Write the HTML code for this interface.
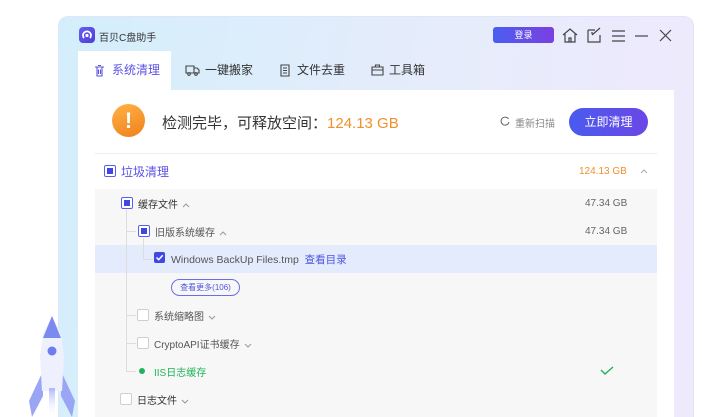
<!DOCTYPE html>
<html><head><meta charset="utf-8"><style>
*{margin:0;padding:0;box-sizing:border-box}
html,body{width:725px;height:417px;overflow:hidden}
body{background:#fff;font-family:"Liberation Sans","Noto Sans CJK SC",sans-serif;position:relative}
.win{position:absolute;left:58px;top:16px;width:636px;height:401px;border-radius:10px 10px 0 0;background:linear-gradient(100deg,#d3eefb 0%,#e6ecfb 55%,#efe9fc 100%);border:1px solid #dfe6fa;border-bottom:none}
.abs{position:absolute}
.tab{position:absolute;top:51px;height:39px;font-size:12px;color:#333;line-height:39px}
.panel{position:absolute;left:78px;top:90px;width:596px;height:327px;background:#fff}
.list{position:absolute;left:95px;top:189px;width:562px;height:228px;background:#f7f7f7}
.cb{position:absolute;width:12px;height:12px;border:1px solid #cfcfcf;background:#fff;border-radius:2px}
.cbp{border-color:#5b5ff0}
.cbp::after{content:"";position:absolute;left:2px;top:2px;width:6px;height:6px;background:#4148e0}
.t{position:absolute;font-size:11px;color:#333;white-space:nowrap}
.g{position:absolute;font-size:10px;color:#666}
.ln{position:absolute;background:#ddd}
.ch{display:inline-block;vertical-align:middle;margin-left:4px}
</style></head><body>
<div class="win"></div>
<div class="abs" style="left:79px;top:27px;width:16px;height:16px;border-radius:4px;background:linear-gradient(135deg,#6a5cf0,#4a3fd8)"></div>
<svg class="abs" style="left:81px;top:29px" width="12" height="12" viewBox="0 0 12 12"><path d="M3 9 A4 4 0 1 1 9 9" stroke="#fff" stroke-width="1.8" fill="none"/><circle cx="6" cy="6.5" r="1.6" fill="#fff"/></svg>
<div class="t" style="left:99px;top:29px;font-size:10px">百贝C盘助手</div>
<div class="abs" style="left:493px;top:27px;width:61px;height:16px;border-radius:3px;background:linear-gradient(90deg,#4a5ef0,#7b3fe0);color:#fff;font-size:9px;text-align:center;line-height:16px">登录</div>
<svg class="abs" style="left:562px;top:27px" width="115" height="18" viewBox="0 0 115 18" fill="none" stroke="#444" stroke-width="1.2">
<path d="M1 8 L8 2 L15 8 M3 7 V15 H13 V7 M7 15 V11 H9 V15"/>
<path d="M26 3 H33 M26 3 V15 H38 V8 M30 8 L38 1 M29 6 H31"/>
<path d="M50 4 H63 M50 9 H63 M50 14 H63"/>
<path d="M73 9 H86"/>
<path d="M98 3 L109 14 M109 3 L98 14"/>
</svg>
<div class="abs" style="left:78px;top:51px;width:93px;height:40px;background:#fff"></div>
<svg class="abs" style="left:93px;top:64px" width="80" height="14" fill="none" stroke-width="1.1">
<path d="M2 3 H11 M4 3 V12 H9 V3 M5 1.5 H8 M5.5 5.5 V10 M7.5 5.5 V10" stroke="#5b52e6"/>
<path d="M94 3 H103 V10 H94Z M103 6 H107 L109 8 V10 H103 M96 12 a1 1 0 1 0 .1 0 M106 12 a1 1 0 1 0 .1 0" stroke="#444" transform="translate(-2,0)"/>
</svg>
<div class="tab" style="left:112px;color:#5b52e6">系统清理</div>
<svg class="abs" style="left:185px;top:63px" width="15" height="14" fill="none" stroke="#444" stroke-width="1.1"><path d="M1 3 H9 V10 H1Z M9 5 H12 L14 7 V10 H9"/><circle cx="4" cy="11" r="1.3"/><circle cx="11" cy="11" r="1.3"/></svg>
<div class="tab" style="left:205px">一键搬家</div>
<svg class="abs" style="left:279px;top:64px" width="12" height="13" fill="none" stroke="#444" stroke-width="1.1"><path d="M2 1 H10 V12 H2Z M4 4 H8 M4 6.5 H8 M4 9 H8"/></svg>
<div class="tab" style="left:297px">文件去重</div>
<svg class="abs" style="left:371px;top:64px" width="13" height="12" fill="none" stroke="#444" stroke-width="1.1"><path d="M1 3 H12 V11 H1Z M1 6 H12 M4.5 3 V1 H8.5 V3"/></svg>
<div class="tab" style="left:389px">工具箱</div>
<div class="panel"></div>
<div class="abs" style="left:112px;top:104px;width:33px;height:33px;border-radius:50%;background:linear-gradient(160deg,#ffb347,#f07f1a);color:#fff;font-size:22px;font-weight:bold;text-align:center;line-height:33px">!</div>
<div class="t" style="left:162px;top:112px;font-size:15px;color:#333">检测完毕，可释放空间：<span style="color:#f0902a">124.13 GB</span></div>
<svg class="abs" style="left:500px;top:116px" width="10" height="10"><path d="M8.5 3 A4 4 0 1 0 9 6" stroke="#666" fill="none" stroke-width="1"/></svg>
<div class="t" style="left:515px;top:115px;font-size:10px;color:#888">重新扫描</div>
<div class="abs" style="left:569px;top:108px;width:79px;height:28px;border-radius:14px;background:linear-gradient(90deg,#4a5bee,#6b47e6);color:#fff;font-size:12px;text-align:center;line-height:28px">立即清理</div>
<div class="ln" style="left:95px;top:153px;width:562px;height:1px;background:#eee"></div>
<div class="cb cbp" style="left:104px;top:165px"></div>
<div class="t" style="left:121px;top:163px;font-size:12px;color:#5b52e6">垃圾清理</div>
<div class="t" style="left:579px;top:166px;font-size:10px;color:#f0902a">124.13 GB</div>
<svg class="abs" style="left:640px;top:169px" width="8" height="5"><path d="M1 4 L4 1 L7 4" stroke="#aaa" fill="none"/></svg>
<div class="list"></div>
<div class="abs" style="left:95px;top:245px;width:562px;height:28px;background:#e3ebfc"></div>
<div class="ln" style="left:126px;top:210px;width:1px;height:161px"></div>
<div class="ln" style="left:126px;top:231px;width:10px;height:1px"></div>
<div class="ln" style="left:126px;top:315px;width:10px;height:1px"></div>
<div class="ln" style="left:126px;top:343px;width:10px;height:1px"></div>
<div class="ln" style="left:126px;top:371px;width:10px;height:1px"></div>
<div class="ln" style="left:143px;top:238px;width:1px;height:21px"></div>
<div class="ln" style="left:143px;top:259px;width:10px;height:1px"></div>
<div class="cb cbp" style="left:121px;top:197px"></div>
<div class="t" style="left:138px;top:196px;font-size:10px">缓存文件<svg class="ch" width="8" height="5"><path d="M1 4 L4 1 L7 4" stroke="#999" fill="none"/></svg></div>
<div class="g" style="left:585px;top:198px">47.34 GB</div>
<div class="cb cbp" style="left:138px;top:225px"></div>
<div class="t" style="left:155px;top:224px;font-size:10px;color:#555">旧版系统缓存<svg class="ch" width="8" height="5"><path d="M1 4 L4 1 L7 4" stroke="#999" fill="none"/></svg></div>
<div class="g" style="left:585px;top:226px">47.34 GB</div>
<div class="abs" style="left:154px;top:252px;width:11px;height:11px;border-radius:2px;background:#4148e0"></div>
<svg class="abs" style="left:154px;top:252px" width="11" height="11"><path d="M2.5 5.5 L4.7 7.7 L8.7 3.3" stroke="#fff" stroke-width="1.5" fill="none"/></svg>
<div class="t" style="left:171px;top:252px;font-size:10.5px;color:#555">Windows BackUp Files.tmp &nbsp;<span style="color:#4f55e0">查看目录</span></div>
<div class="abs" style="left:171px;top:279px;width:69px;height:17px;border:1px solid #6a6ee8;border-radius:9px;font-size:8px;color:#4f55e0;text-align:center;line-height:15px">查看更多(106)</div>
<div class="cb" style="left:137px;top:309px"></div>
<div class="t" style="left:154px;top:308px;font-size:10px;color:#555">系统缩略图<svg class="ch" width="8" height="5"><path d="M1 1 L4 4 L7 1" stroke="#999" fill="none"/></svg></div>
<div class="cb" style="left:137px;top:337px"></div>
<div class="t" style="left:154px;top:336px;font-size:10px;color:#555">CryptoAPI证书缓存<svg class="ch" width="8" height="5"><path d="M1 1 L4 4 L7 1" stroke="#999" fill="none"/></svg></div>
<div class="abs" style="left:139px;top:368px;width:6px;height:6px;border-radius:50%;background:#22b35a"></div>
<div class="t" style="left:154px;top:364px;font-size:10px;color:#22b35a">IIS日志缓存</div>
<svg class="abs" style="left:600px;top:366px" width="14" height="10"><path d="M1 4 L5 8 L13 1" stroke="#22b35a" stroke-width="1.4" fill="none"/></svg>
<div class="cb" style="left:120px;top:393px"></div>
<div class="t" style="left:137px;top:392px;font-size:10px">日志文件<svg class="ch" width="8" height="5"><path d="M1 1 L4 4 L7 1" stroke="#999" fill="none"/></svg></div>
<svg class="abs" style="left:24px;top:316px" width="56" height="101" viewBox="0 0 56 101">
<defs><linearGradient id="fl" x1="0" y1="0" x2="0" y2="1"><stop offset="0" stop-color="#aab6f8"/><stop offset="1" stop-color="#fff" stop-opacity="0"/></linearGradient></defs>
<path d="M19 55 L5 85 L8 101 L19 80Z M37 55 L51 85 L48 101 L37 80Z" fill="#9aa6f5"/>
<path d="M28 0 L19 18 L16 40 L18 75 L38 75 L40 40 L37 18Z" fill="#eef1fd"/>
<path d="M28 0 L19 22 L37 22Z" fill="#7b8af0"/>
<circle cx="28" cy="35" r="4.5" fill="#6e7cf0"/>
<rect x="25" y="72" width="6" height="29" fill="url(#fl)"/>
</svg>
</body></html>
